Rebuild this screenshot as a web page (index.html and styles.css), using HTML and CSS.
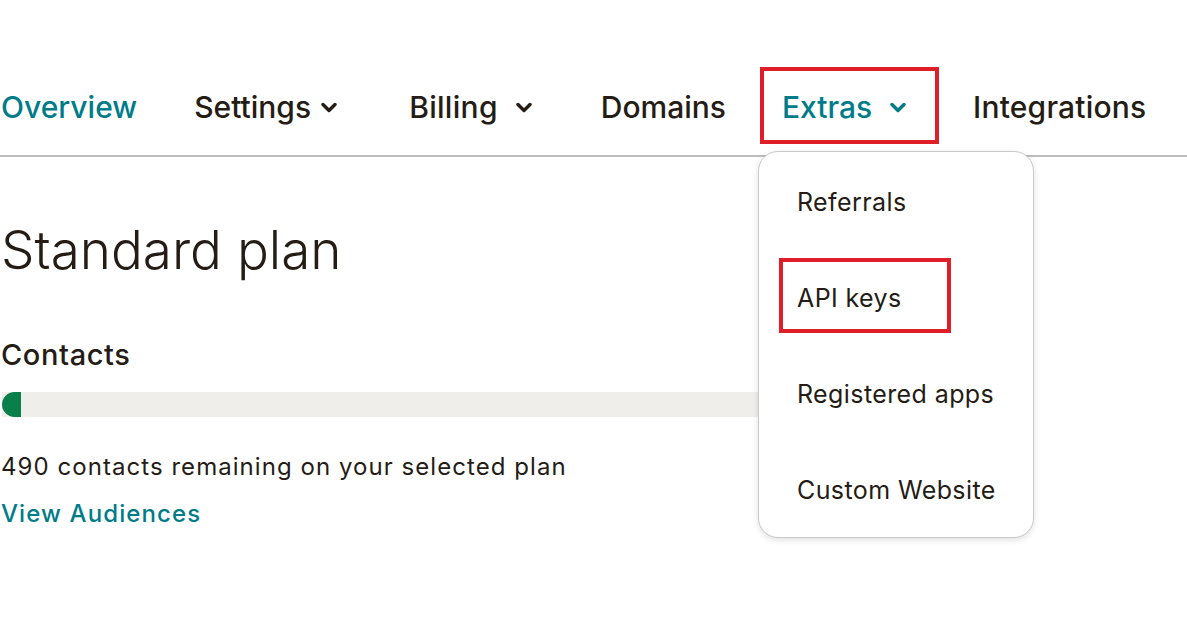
FILE: index.html
```html
<!DOCTYPE html>
<html lang="en">
<head>
<meta charset="utf-8">
<title>Account</title>
<link rel="stylesheet" href="styles.css">
</head>
<body>
<div class="page">
  <nav class="nav">
    <a class="nav-item active item-overview">Overview</a>
    <a class="nav-item item-settings">Settings<svg class="chev" viewBox="0 0 16 11"><path d="M2 2.5 L8 8.5 L14 2.5"/></svg></a>
    <a class="nav-item item-billing">Billing<svg class="chev wide" viewBox="0 0 16 11"><path d="M2 2.5 L8 8.5 L14 2.5"/></svg></a>
    <a class="nav-item item-domains">Domains</a>
    <a class="nav-item active item-extras highlight">Extras<svg class="chev wide" viewBox="0 0 16 11"><path d="M2 2.5 L8 8.5 L14 2.5"/></svg></a>
    <a class="nav-item item-integrations">Integrations</a>
  </nav>

  <main class="content">
    <h1 class="title">Standard plan</h1>
    <h2 class="section-title">Contacts</h2>
    <div class="bar"><div class="bar-fill" style="width:19px"></div></div>
    <p class="remaining">490 contacts remaining on your selected plan</p>
    <a class="link">View Audiences</a>
  </main>

  <div class="dropdown">
    <a class="dd-item">Referrals</a>
    <a class="dd-item highlight">API keys</a>
    <a class="dd-item">Registered apps</a>
    <a class="dd-item">Custom Website</a>
  </div>
</div>
</body>
</html>
```

FILE: styles.css
```css
* { box-sizing: border-box; }
html, body { margin: 0; padding: 0; background: #fff; }
body {
  font-family: "Inter", "Liberation Sans", Arial, sans-serif;
  color: #241c15;
  width: 1187px;
  height: 634px;
  overflow: hidden;
}
.page { position: relative; height: 634px; }

.nav {
  display: flex;
  align-items: flex-start;
  padding-top: 67px;
  height: 157px;
  border-bottom: 2px solid #bdbdbd;
}
.nav-item {
  display: flex;
  align-items: flex-start;
  font-size: 30px;
  line-height: 36px;
  font-weight: 500;
  color: #241c15;
  padding-top: 22px;
  white-space: nowrap;
}
.nav-item.active { color: #007c89; }
.item-overview { margin-left: 1px; }
.item-settings { margin-left: 57px; }
.item-billing { margin-left: 72px; letter-spacing: 0.3px; }
.item-domains { margin-left: 69px; }
.item-extras { margin-left: 34px; }
.item-integrations { margin-left: 34px; letter-spacing: 0.2px; }

.chev {
  width: 16px;
  height: 11px;
  margin-left: 10px;
  margin-top: 13px;
  fill: none;
  stroke: #241c15;
  stroke-width: 3.4;
  stroke-linecap: round;
  stroke-linejoin: round;
}
.chev.wide { margin-left: 18px; }
.active .chev { stroke: #007c89; }

.highlight { border: 4px solid #de1f2a; }
.nav-item.highlight {
  width: 179px;
  height: 77px;
  padding: 18px 0 0 18px;
}

.content { padding-left: 1px; }
.title {
  margin: 63px 0 0;
  font-size: 53px;
  line-height: 60px;
  font-weight: 300;
}
.section-title {
  margin: 58px 0 0;
  font-size: 29px;
  line-height: 34px;
  font-weight: 500;
  letter-spacing: 0.6px;
}
.bar {
  margin-top: 20px;
  width: 1000px;
  height: 25px;
  background: #efeeea;
  margin-left: 1px;
}
.bar-fill {
  height: 100%;
  background: #0b7f4b;
  border-radius: 13px 0 0 13px;
}
.remaining {
  margin: 35px 0 0;
  font-size: 24px;
  line-height: 30px;
  font-weight: 400;
  letter-spacing: 1.05px;
}
.link {
  display: block;
  margin-top: 17px;
  font-size: 24px;
  line-height: 30px;
  font-weight: 500;
  letter-spacing: 1.1px;
  color: #007c89;
}

.dropdown {
  position: absolute;
  left: 758px;
  top: 151px;
  width: 276px;
  height: 387px;
  background: #fff;
  border: 1.5px solid #c9c9c9;
  border-radius: 20px;
  box-shadow: 0 2px 6px rgba(0,0,0,0.12);
  padding: 10px 0 0 20px;
  display: flex;
  flex-direction: column;
  align-items: flex-start;
  gap: 21px;
}
.dd-item {
  display: block;
  width: 172px;
  height: 75px;
  border: 4px solid transparent;
  padding: 21px 0 0 14px;
  font-size: 25px;
  line-height: 30px;
  font-weight: 400;
  letter-spacing: 0.4px;
  color: #241c15;
  white-space: nowrap;
}
.dd-item.highlight { border-color: #de1f2a; }
```
